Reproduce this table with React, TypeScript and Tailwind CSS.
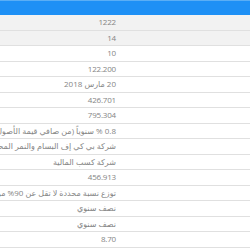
import React from 'react';

const rows = [
    '1222',
    '14',
    '10',
    '122.200',
    '20 مارس 2018',
    '426.701',
    '795.304',
    '0.8 % سنوياً (من صافي قيمة الأصول بعد خصم المصاريف)',
    'شركة بي كي إف البسام والنمر المحاسبون المتحالفون',
    'شركة كسب المالية',
    '456.913',
    'توزع نسبة محددة لا تقل عن 90% من صافي الأرباح',
    'نصف سنوي',
    'نصف سنوي',
    '8.70',
];

export default function App() {
    return (
        <div className="w-[250px] h-[250px] overflow-hidden bg-white" style={{ fontFamily: '"Open Sans", "DejaVu Sans", sans-serif' }}>
            {/* Header bar */}
            <div className="h-[15px] bg-[#1e90f5] border-t border-[#5aaef5]" />

            {/* Table */}
            <div className="flex flex-col">
                {rows.map((value, i) => (
                    <div
                        key={i}
                        className={`flex h-[15.5px] border-b border-[#e0e0e0] ${i < 2 ? 'bg-[#f2f2f2]' : 'bg-white'}`}
                    >
                        <div
                            dir="rtl"
                            className="w-[118px] flex items-center whitespace-nowrap overflow-hidden pr-[2px] text-[8px] text-[#858585]"
                        >
                            <span className="tracking-[-0.2px]">{value}</span>
                        </div>
                        <div className="flex-1" />
                    </div>
                ))}
            </div>
        </div>
    );
}
